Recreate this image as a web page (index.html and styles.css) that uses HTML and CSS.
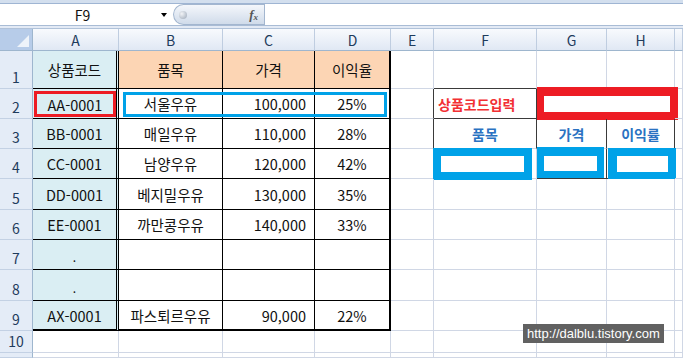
FILE: index.html
```html
<!DOCTYPE html>
<html lang="ko">
<head>
<meta charset="utf-8">
<title>Excel</title>
<link rel="stylesheet" href="styles.css">
</head>
<body>
<div class="app">
  <div class="topband"></div>
  <div class="fbar">
    <div class="namebox"><span class="nb-text">F9</span><span class="nb-arrow"></span></div>
    <div class="capsule"><span class="bead"></span><span class="fx">f<sub>x</sub></span></div>
    <div class="finput"></div>
  </div>
  <div class="gap"></div>
  <div class="sheet">
    <!-- header row -->
    <div class="c corner"></div>
    <div class="c ch">A</div>
    <div class="c ch">B</div>
    <div class="c ch">C</div>
    <div class="c ch">D</div>
    <div class="c ch">E</div>
    <div class="c ch">F</div>
    <div class="c ch">G</div>
    <div class="c ch">H</div>
    <div class="c ch"></div>

    <!-- row 1 -->
    <div class="c rh">1</div>
    <div class="c t hd ca">상품코드</div>
    <div class="c t hd">품목</div>
    <div class="c t hd">가격</div>
    <div class="c t hd cd">이익율</div>
    <div class="c"></div>
    <div class="c dk-b"></div>
    <div class="c"></div>
    <div class="c"></div>
    <div class="c"></div>

    <!-- row 2 -->
    <div class="c rh">2</div>
    <div class="c t ca a2"><div class="redbox">AA-0001</div></div>
    <div class="c t">서울우유</div>
    <div class="c t num">100,000</div>
    <div class="c t cd">25%</div>
    <div class="c dk-r"></div>
    <div class="c dk-r dk-b lbl">상품코드입력</div>
    <div class="c merged"><div class="frame red-f"></div></div>
    <div class="c"></div>

    <!-- row 3 -->
    <div class="c rh">3</div>
    <div class="c t ca">BB-0001</div>
    <div class="c t">매일우유</div>
    <div class="c t num">110,000</div>
    <div class="c t cd">28%</div>
    <div class="c dk-r"></div>
    <div class="c dk-r sub">품목</div>
    <div class="c dk-r sub">가격</div>
    <div class="c dk-r sub">이익률</div>
    <div class="c"></div>

    <!-- row 4 -->
    <div class="c rh">4</div>
    <div class="c t ca">CC-0001</div>
    <div class="c t">남양우유</div>
    <div class="c t num">120,000</div>
    <div class="c t cd">42%</div>
    <div class="c"></div>
    <div class="c"><div class="frame blue-f f4"></div></div>
    <div class="c dk-r dk-b"><div class="frame blue-f g4"></div></div>
    <div class="c dk-b"><div class="frame blue-f h4"></div></div>
    <div class="c"></div>

    <!-- row 5 -->
    <div class="c rh">5</div>
    <div class="c t ca">DD-0001</div>
    <div class="c t">베지밀우유</div>
    <div class="c t num">130,000</div>
    <div class="c t cd">35%</div>
    <div class="c"></div>
    <div class="c"></div>
    <div class="c"></div>
    <div class="c"></div>
    <div class="c"></div>

    <!-- row 6 -->
    <div class="c rh">6</div>
    <div class="c t ca">EE-0001</div>
    <div class="c t">까만콩우유</div>
    <div class="c t num">140,000</div>
    <div class="c t cd">33%</div>
    <div class="c"></div>
    <div class="c"></div>
    <div class="c"></div>
    <div class="c"></div>
    <div class="c"></div>

    <!-- row 7 -->
    <div class="c rh">7</div>
    <div class="c t ca dot">.</div>
    <div class="c t"></div>
    <div class="c t num"></div>
    <div class="c t cd"></div>
    <div class="c"></div>
    <div class="c"></div>
    <div class="c"></div>
    <div class="c"></div>
    <div class="c"></div>

    <!-- row 8 -->
    <div class="c rh">8</div>
    <div class="c t ca dot">.</div>
    <div class="c t"></div>
    <div class="c t num"></div>
    <div class="c t cd"></div>
    <div class="c"></div>
    <div class="c"></div>
    <div class="c"></div>
    <div class="c"></div>
    <div class="c"></div>

    <!-- row 9 -->
    <div class="c rh">9</div>
    <div class="c t ca last">AX-0001</div>
    <div class="c t last">파스퇴르우유</div>
    <div class="c t num last">90,000</div>
    <div class="c t cd last">22%</div>
    <div class="c"></div>
    <div class="c"></div>
    <div class="c"></div>
    <div class="c"></div>
    <div class="c"></div>

    <!-- row 10 -->
    <div class="c rh">10</div>
    <div class="c"></div>
    <div class="c"></div>
    <div class="c"></div>
    <div class="c"></div>
    <div class="c"></div>
    <div class="c"></div>
    <div class="c"></div>
    <div class="c"></div>
    <div class="c"></div>

    <!-- row 11 (partial) -->
    <div class="c rh"></div>
    <div class="c"></div>
    <div class="c"></div>
    <div class="c"></div>
    <div class="c"></div>
    <div class="c"></div>
    <div class="c"></div>
    <div class="c"></div>
    <div class="c"></div>
    <div class="c"></div>

    <div class="ann-blue"></div>
    <div class="watermark">http://dalblu.tistory.com</div>
  </div>
</div>
</body>
</html>
```

FILE: styles.css
```css
* { box-sizing: border-box; }
html, body { margin: 0; padding: 0; }
body {
  width: 683px;
  height: 359px;
  overflow: hidden;
  background: #fff;
  color: #111;
  font-family: "Noto Sans CJK KR", "Noto Sans", sans-serif;
  font-size: 14.5px;
}

.topband {
  height: 4px;
  background: #d3dfee;
  border-bottom: 1px solid #9fb5d3;
}

.fbar {
  height: 22px;
  display: flex;
  border-bottom: 1px solid #a9bcd5;
  background: #fff;
}
.namebox {
  width: 173px;
  display: flex;
  align-items: center;
  padding-right: 6px;
  font-size: 14px;
  color: #111;
}
.nb-text { flex: 1; text-align: center; padding-left: 4px; }
.nb-arrow {
  width: 0; height: 0;
  border-top: 4px solid #000;
  border-left: 3.5px solid transparent;
  border-right: 3.5px solid transparent;
}
.capsule {
  width: 91px;
  display: flex;
  align-items: center;
  border: 1px solid #a3b6cf;
  border-right: none;
  border-radius: 11px 0 0 11px;
  background: linear-gradient(#f4f7fb, #d0dbea);
  padding-left: 5px;
}
.bead {
  width: 8px; height: 8px;
  border-radius: 50%;
  background: radial-gradient(circle at 35% 35%, #f2f4f7, #9aa6b6);
}
.fx {
  margin-left: auto;
  padding-right: 6px;
  font-family: "Liberation Serif", serif;
  font-style: italic;
  font-weight: bold;
  font-size: 13px;
  color: #555;
  line-height: 1;
}
.fx sub { font-size: 9px; vertical-align: -1px; }
.finput {
  flex: 1;
  border-left: 1px solid #a3b6cf;
  background: #fff;
}

.gap {
  height: 3px;
  background: #e3eaf5;
  border-bottom: 1px solid #b0c2d9;
}

.sheet {
  position: relative;
  display: grid;
  grid-template-columns: 33px 86px 104px 92px 76px 43px 103px 70px 68px 1fr;
  grid-template-rows: 22px 38px 30px 30px 30px 31px 30px 30px 31px 30px 22px 1fr;
  height: 329px;
}

.c {
  border-right: 1px solid #d0d7e5;
  border-bottom: 1px solid #d0d7e5;
  display: flex;
  align-items: center;
  justify-content: center;
  white-space: nowrap;
  min-width: 0;
}

.corner {
  position: relative;
  background: #b7cce9;
  border-right: 1px solid #9eb6ce;
  border-bottom: 1px solid #9eb6ce;
}
.corner::after {
  content: "";
  position: absolute;
  right: 3px;
  bottom: 3px;
  width: 0; height: 0;
  border-left: 12px solid transparent;
  border-bottom: 12px solid #eef3fa;
}
.ch {
  background: linear-gradient(#f8fafd, #e0e8f4);
  border-right: 1px solid #bfcde0;
  border-bottom: 1px solid #9eb6ce;
  color: #1e3b5c;
  font-size: 14px;
}
.rh {
  background: #e4ecf7;
  border-right: 1px solid #9eb6ce;
  border-bottom: 1px solid #c3d1e4;
  color: #1e3b5c;
  font-size: 14px;
  align-items: flex-end;
  line-height: 1.2;
  padding-bottom: 2px;
}

/* data table */
.t { border-right-color: #000; border-bottom-color: #000; }
.hd { background: #fcd5b4; }
.ca { background: #daeef3; border-right: 3px double #000; }
.cd { border-right: 2px solid #000; }
.last { border-bottom: 2px solid #000; }
.num { justify-content: flex-end; padding-right: 8px; }
.dot { font-size: 12px; padding-top: 4px; }

.a2 { align-items: stretch; padding: 2px 0 1px 1px; }
.redbox {
  flex: 1;
  display: flex;
  align-items: center;
  justify-content: center;
  border: 3px solid #ed1c24;
}

/* right input form */
.dk-r { border-right-color: #3a3a3a; }
.dk-b { border-bottom-color: #3a3a3a; }
.lbl {
  justify-content: flex-start;
  padding-left: 4px;
  color: #f23034;
  font-weight: bold;
  font-size: 14px;
}
.sub {
  color: #2a72c2;
  font-weight: bold;
  font-size: 14px;
}
.merged {
  grid-column: span 2;
  align-items: stretch;
  border-bottom: none;
  border-right: none;
}
.frame { flex: 1; background: #fff; border-style: solid; }
.red-f {
  border-color: #ed1c24;
  border-width: 9px 8px 8px 7px;
  margin: -2px -3px -1px 0;
}
.c:has(> .blue-f) { align-items: stretch; }
.blue-f { border-color: #00a2e8; }
.f4 { border-width: 8px; margin: -1px 4px -2px -1px; }
.g4 { border-width: 9px 7px 7px 7px; margin: -2px 2px 0 0; }
.h4 { border-width: 8px 8px 7px 9px; margin: -1px -2px -1px 1px; }

/* overlays */
.ann-blue {
  position: absolute;
  left: 123px;
  top: 63px;
  width: 264px;
  height: 25px;
  border: 3px solid #00a2e8;
}
.watermark {
  position: absolute;
  left: 523px;
  top: 295px;
  width: 141px;
  height: 19px;
  background: #616161;
  color: #fff;
  font-family: "Liberation Sans", sans-serif;
  font-size: 13px;
  line-height: 19px;
  padding-left: 4px;
  white-space: nowrap;
  overflow: hidden;
}
```
